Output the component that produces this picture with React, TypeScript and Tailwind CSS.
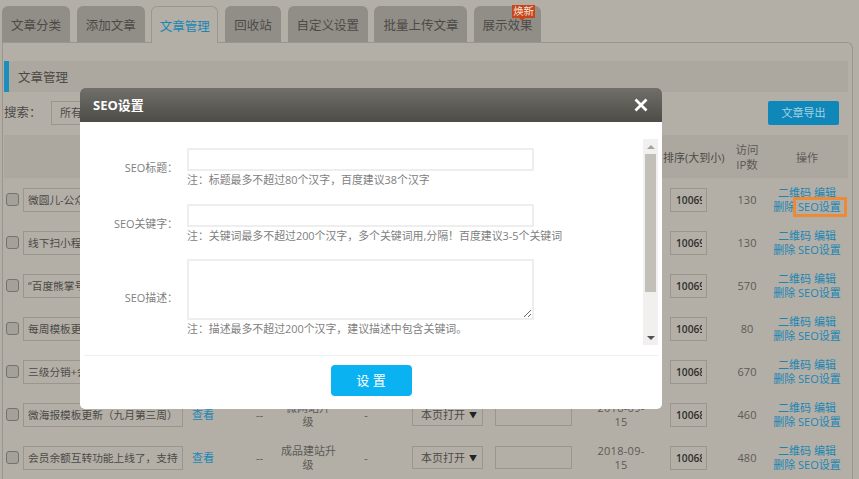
import React from "react";

const tabs: [string, string][] = [
  ["文章分类", "w-[68px]"],
  ["添加文章", "w-[68px]"],
  ["文章管理", "w-[67px]"],
  ["回收站", "w-[56px]"],
  ["自定义设置", "w-[80px]"],
  ["批量上传文章", "w-[93px]"],
  ["展示效果", "w-[67px]"],
];

const rows = [
  { t: "微圆儿-公众号吸粉活动上线了", c: ["微网站升", "级"], s: "10069", ip: "130" },
  { t: "线下扫小程序码功能上线了", c: ["微网站升", "级"], s: "10069", ip: "130" },
  { t: "\u201C百度熊掌号\u201D功能上线了", c: ["微网站升", "级"], s: "10069", ip: "570" },
  { t: "每周模板更新\uFF08九月第三周\uFF09", c: ["微网站升", "级"], s: "10069", ip: "80" },
  { t: "三级分销+会员功能上线了", c: ["微网站升", "级"], s: "10068", ip: "670" },
  { t: "微海报模板更新\uFF08九月第三周\uFF09", c: ["微网站升", "级"], s: "10068", ip: "460" },
  { t: "会员余额互转功能上线了\uFF0C支持", c: ["成品建站升", "级"], s: "10068", ip: "480" },
];

const grid =
  "grid grid-cols-[19px_160px_55px_43px_54px_63px_91px_89px_86px_56px_54px_66px] items-center";

function Row({ r, first }: { r: (typeof rows)[number]; first: boolean }) {
  return (
    <div className={`${grid} h-[43px] text-[11px] text-[#5c5a55] leading-[22px]`}>
      <div className="flex justify-start pl-[2px]">
        <span className="block h-[13px] w-[13px] rounded-[3px] border-[1.5px] border-[#75736e] bg-[#a4a19a]" />
      </div>
      <input
        readOnly
        value={r.t}
        className="h-[24px] w-[160px] border border-[#9a968e] bg-transparent px-[4px] text-[10.7px] text-[#4c4a46] outline-none"
      />
      <a className="pl-[9px] pt-[1px] text-[#1a86b4]">查看</a>
      <div className="pt-[1px] text-center">--</div>
      <div className="whitespace-nowrap pt-[1px] text-center leading-[14.5px]">
        {r.c[0]}
        <br />
        {r.c[1]}
      </div>
      <div className="pr-[1px] pt-[1px] text-center">-</div>
      <div className="flex justify-end pr-[6px]">
        <div className="flex h-[23px] w-[71px] items-center justify-between whitespace-nowrap border border-[#9a968e] pl-[8px] pr-[5px] pt-[1px] text-[#4c4a46]">
          <span>本页打开</span>
          <span className="text-[8px] text-[#222]">▼</span>
        </div>
      </div>
      <div className="flex justify-center">
        <div className="h-[23px] w-[77px] border border-[#9a968e]" />
      </div>
      <div className="pt-[1px] text-center leading-[14.5px] tracking-[0.3px]">
        2018-09-
        <br />
        15
      </div>
      <div className="pl-[6px]">
        <input
          readOnly
          value={r.s}
          className="h-[24px] w-[37px] border border-[#9a968e] bg-transparent pl-[5px] pr-[4px] text-[10.2px] font-semibold text-[#2f2e2b] outline-none"
        />
      </div>
      <div className="pt-[1px] text-center">{r.ip}</div>
      <div className="flex flex-col items-center whitespace-nowrap pt-[1px] leading-[14.5px] text-[#1a86b4]">
        <span>二维码 编辑</span>
        <span>
          删除{" "}
          <span className="relative">
            SEO设置
            {first && (
              <span className="absolute -bottom-[3px] -left-[5px] -right-[6px] -top-[2px] border-[3px] border-[#ec8a3a]" />
            )}
          </span>
        </span>
      </div>
    </div>
  );
}

export default function App() {
  return (
    <div
      className="relative h-[479px] w-[859px] overflow-hidden bg-[#b3afa7] pt-[6px] pl-[2px]"
      style={{ fontFamily: '"Open Sans","Noto Sans CJK SC",sans-serif' }}
    >
      <div className="relative z-10 flex h-[36px] gap-[6.7px]">
        {tabs.map(([t, w], i) => (
          <div
            key={t}
            className={`relative flex items-center justify-center rounded-t-[6px] pt-[5px] text-[12.5px] ${w} ${
              i === 2
                ? "h-[37px] border border-b-0 border-[#9a968e] bg-[#b3afa7] text-[#1a86b4]"
                : "bg-[#918e88] text-[#4c4a46]"
            }`}
          >
            {t}
            {i === 6 && (
              <span className="absolute -top-[1px] right-[6px] h-[13px] bg-[#c8441b] px-[1px] text-[10.5px] leading-[13px] text-[#f3e2d4]">
                焕新
                <span className="absolute left-[7px] top-[13px] h-0 w-0 border-x-[3px] border-t-[3px] border-x-transparent border-t-[#c8441b]" />
              </span>
            )}
          </div>
        ))}
      </div>

      <div className="h-[460px] w-[851px] rounded-tr-[6px] border border-b-0 border-[#9a968e] pt-[18px] pl-[1px]">
        <div className="flex h-[31px] w-[844px] items-center border-l-[5px] border-[#1a8ebc] bg-[#aca8a0] pl-[9px] pt-[3px] text-[12.5px] text-[#4c4a46]">
          文章管理
        </div>

        <div className="mt-[9px] flex h-[24px] w-[835px] items-center justify-between">
          <div className="flex items-center text-[12.5px] text-[#4c4a46]">
            <span className="w-[47px]">{"搜索\uFF1A"}</span>
            <div className="flex h-[24px] w-[120px] items-center border border-[#9a968e] pl-[8px] text-[11px]">
              所有分类
            </div>
          </div>
          <div className="flex h-[24px] w-[71px] items-center justify-center rounded-[2px] bg-[#0f87b8] text-[11px] text-[#a8d2e2]">
            文章导出
          </div>
        </div>

        <div className={`${grid} mt-[10px] h-[43px] w-[844px] bg-[#aca8a0] text-[11px] leading-[15px] text-[#5c5a55]`}>
          <div />
          <div />
          <div />
          <div />
          <div />
          <div />
          <div />
          <div />
          <div />
          <div className="-ml-[1px] whitespace-nowrap pt-[2px] text-[#4c4a46]">排序(大到小)</div>
          <div className="pt-[1px] text-center text-[11.5px]">
            访问
            <br />
            IP数
          </div>
          <div className="pt-[2px] text-center">操作</div>
        </div>

        <div>
          {rows.map((r, i) => (
            <Row key={i} r={r} first={i === 0} />
          ))}
        </div>
      </div>

      <div className="absolute left-[80px] top-[88px] z-20 h-[321px] w-[582px] overflow-hidden rounded-[5px] bg-white">
        <div className="flex h-[34px] items-center justify-between bg-gradient-to-b from-[#716f69] to-[#4e4c47] pl-[13px] pr-[14px]">
          <span className="pt-[1px] text-[13px] font-bold text-white">SEO设置</span>
          <svg width="14" height="14" viewBox="0 0 14 14" className="text-white">
            <path d="M1.5 1.5 L12.5 12.5 M12.5 1.5 L1.5 12.5" stroke="currentColor" strokeWidth="2.8" />
          </svg>
        </div>

        <div className="relative mx-[4px] mt-[17px] h-[206px] overflow-hidden text-[10.9px] text-[#808080]">
          <div className="pt-[9px]">
            <div className="flex">
              <label className="w-[94px] pt-[8px] text-right leading-[23px]">{"SEO标题\uFF1A"}</label>
              <div className="ml-[9px]">
                <input className="block h-[23px] w-[347px] border-2 border-[#eeeeee] outline-none" />
                <div className="h-[16px] whitespace-nowrap leading-[18px]">{"注\uFF1A标题最多不超过80个汉字\uFF0C百度建议38个汉字"}</div>
              </div>
            </div>
            <div className="mt-[17px] flex">
              <label className="w-[94px] pt-[8px] text-right leading-[23px]">{"SEO关键字\uFF1A"}</label>
              <div className="ml-[9px]">
                <input className="block h-[23px] w-[347px] border-2 border-[#eeeeee] outline-none" />
                <div className="h-[16px] whitespace-nowrap leading-[18px]">{"注\uFF1A关键词最多不超过200个汉字\uFF0C多个关键词用,分隔\uFF01百度建议3-5个关键词"}</div>
              </div>
            </div>
            <div className="mt-[16px] flex">
              <label className="w-[94px] pt-[27px] text-right leading-[23px]">{"SEO描述\uFF1A"}</label>
              <div className="ml-[9px]">
                <textarea className="block h-[61px] w-[347px] border-2 border-[#eeeeee] outline-none" />
                <div className="h-[16px] whitespace-nowrap leading-[18px]">{"注\uFF1A描述最多不超过200个汉字\uFF0C建议描述中包含关键词。"}</div>
              </div>
            </div>
          </div>

          <div className="absolute bottom-0 right-0 top-0 flex w-[15px] flex-col items-center bg-[#f1f0ee]">
            <div className="flex h-[15px] items-center justify-center">
              <span className="h-0 w-0 border-x-[4px] border-b-[4px] border-x-transparent border-b-[#a3a3a3]" />
            </div>
            <div className="h-[138px] w-[11px] bg-[#c2c0b8]" />
            <div className="mt-auto flex h-[15px] items-center justify-center">
              <span className="h-0 w-0 border-x-[4px] border-t-[4px] border-x-transparent border-t-[#505050]" />
            </div>
          </div>
        </div>

        <div className="mx-[4px] mt-[10px] h-[1px] bg-[#eeeeee]" />
        <div className="mt-[9px] flex justify-center">
          <button className="h-[31px] w-[81px] rounded-[4px] bg-[#0bb2f2] pt-[1px] text-[13px] text-white">设 置</button>
        </div>
      </div>
    </div>
  );
}
